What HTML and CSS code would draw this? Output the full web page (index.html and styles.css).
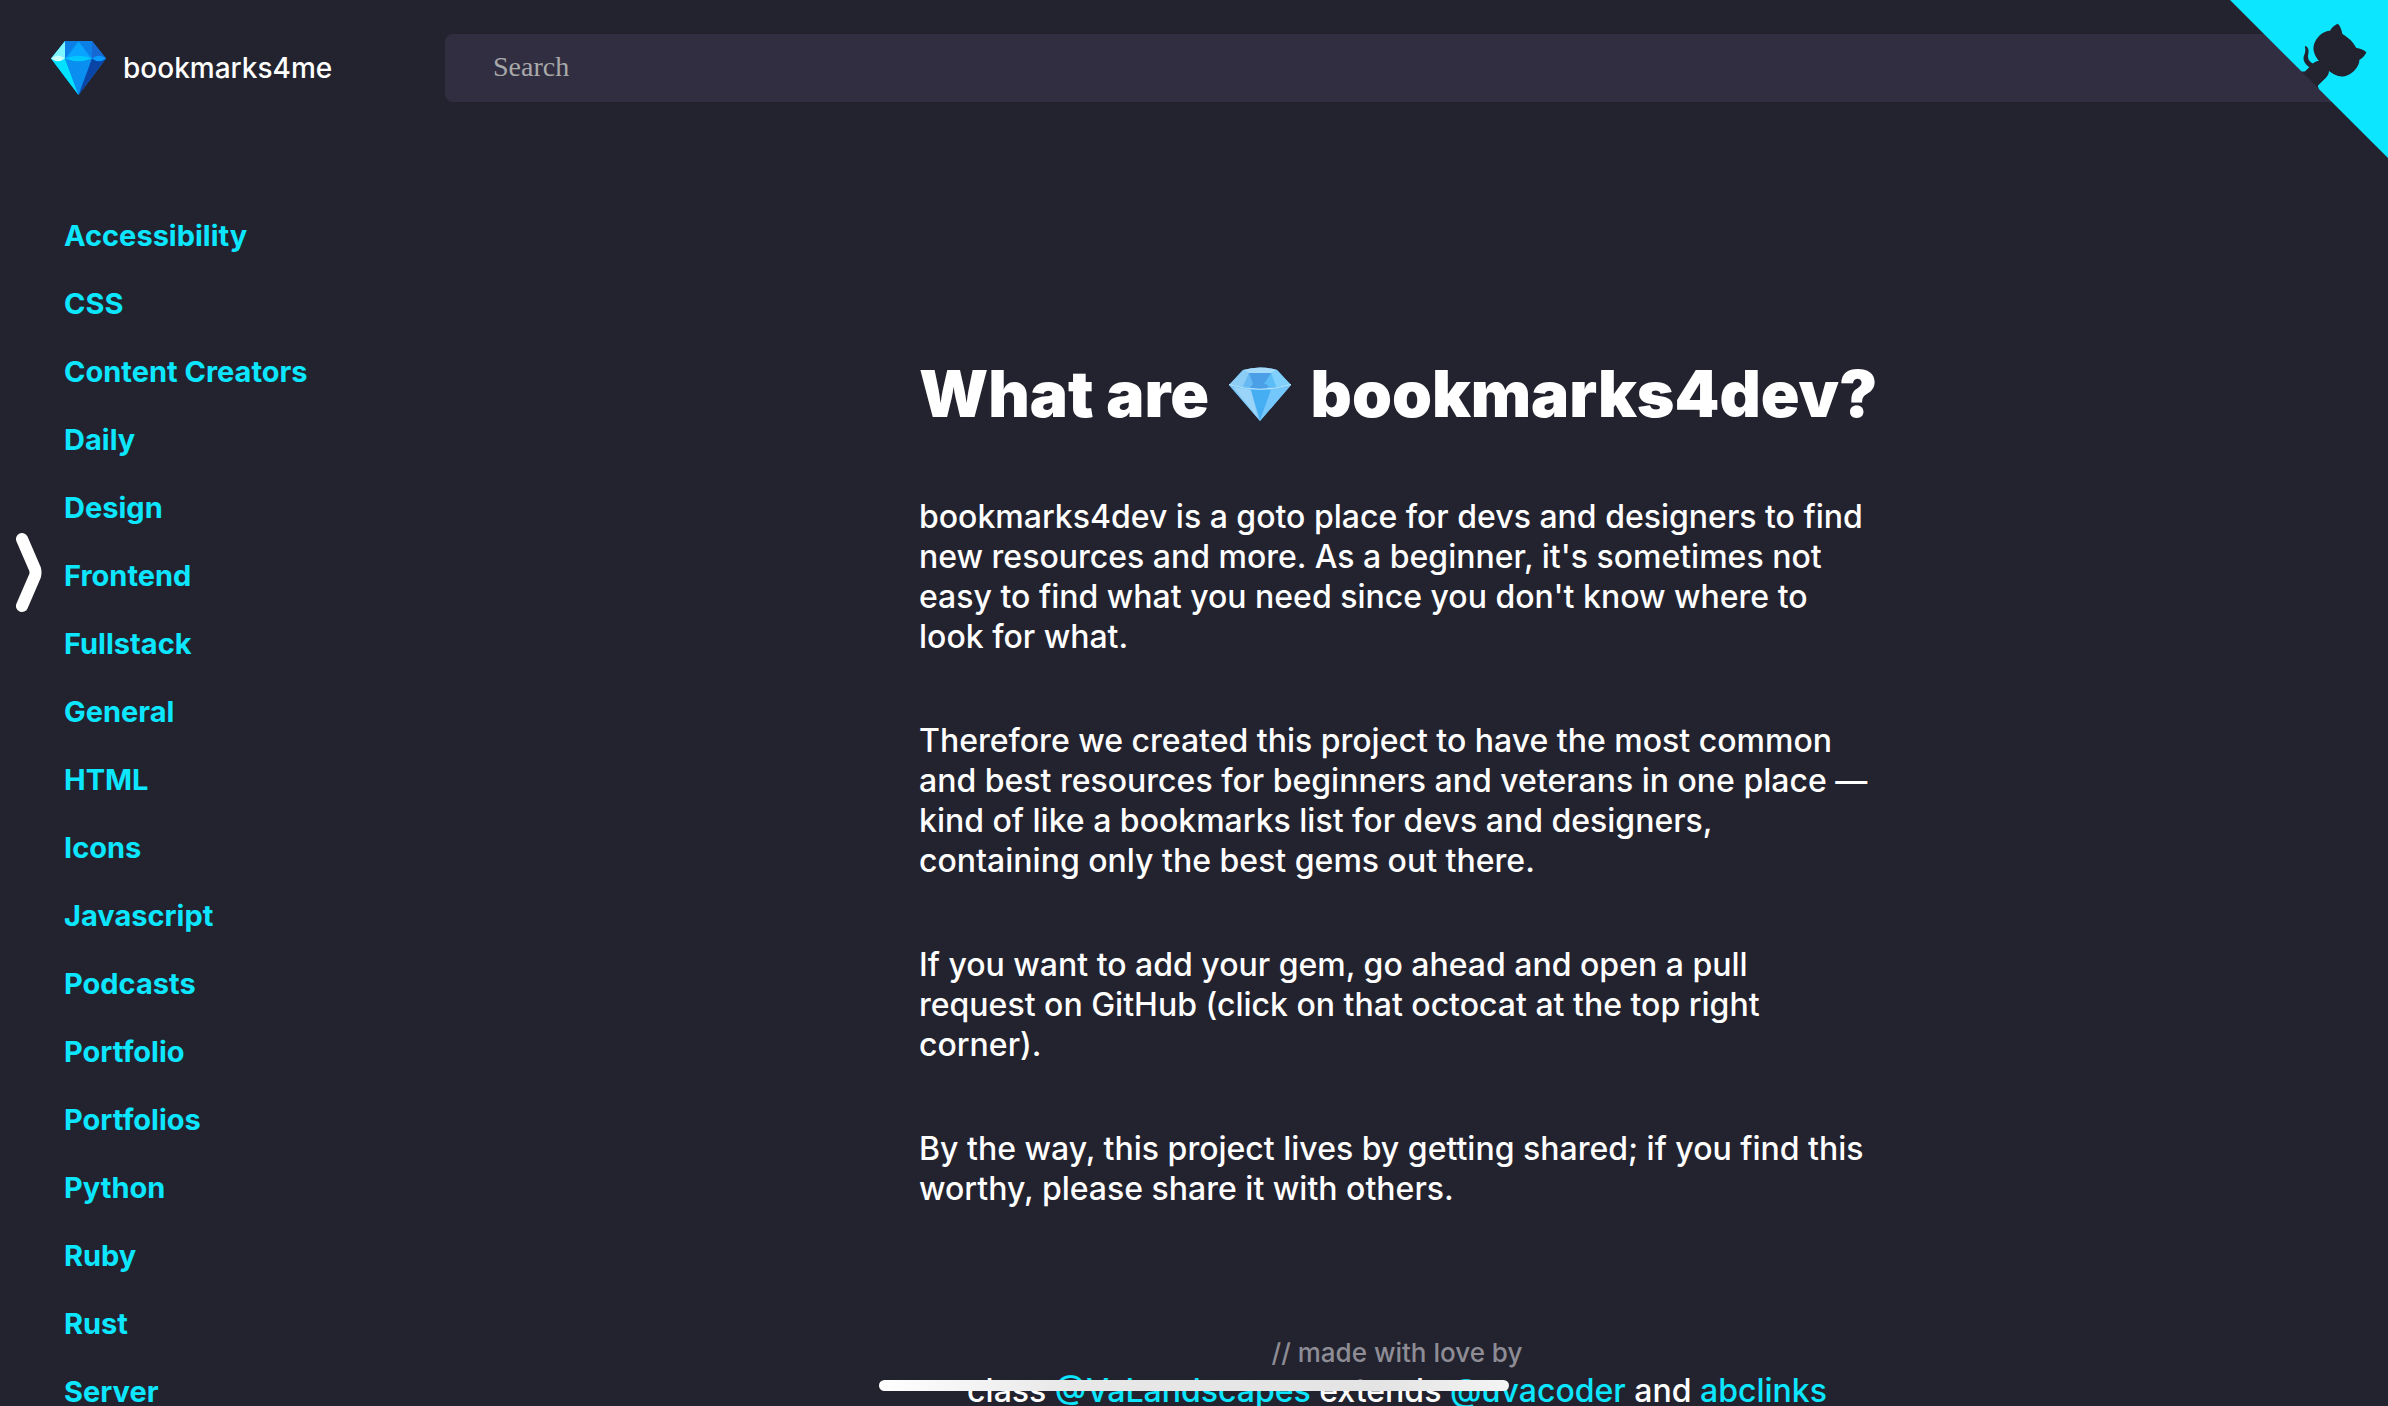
FILE: index.html
```html
<!DOCTYPE html>
<html lang="en">
<head>
<meta charset="utf-8">
<meta name="viewport" content="width=device-width, initial-scale=1">
<title>bookmarks4me</title>
<link rel="stylesheet" href="styles.css">
</head>
<body>
<header class="header">
  <a class="brand" href="#">
    <svg class="brand-gem" viewBox="0 0 55 54" aria-hidden="true">
      <path fill="#0a93f0" d="M14 0H41L55 17.500 27.500 54 0 17.500z"/>
      <path fill="#7df6ff" d="M14 0V17.500H0z"/>
      <path fill="#0b7fe6" d="M14 0H27.500L14 17.500zM27.500 0H41V17.500z"/>
      <path fill="#08a4ff" d="M27.500 1L40 17.500H15z"/>
      <path fill="#1669d4" d="M41 0L55 17.500H41z"/>
      <path fill="#00e2ff" d="M0 17.500H14L27.500 54z"/>
      <path fill="#0a8ef0" d="M14 17.500H41L27.500 54z"/>
      <path fill="#0a45a6" d="M41 17.500H55L27.500 54z"/>
      <path fill="#c9ffff" d="M0 17.500Q7 12 14 17.500 7 23 0 17.500z"/>
      <path fill="#00c8ff" d="M14 17.500Q27.500 12 41 17.500 27.500 23 14 17.500z"/>
      <path fill="#079bff" d="M41 17.500Q48 12 55 17.500 48 23 41 17.500z"/>
    </svg>
    <span>bookmarks4me</span>
  </a>
  <input class="search" type="search" placeholder="Search" aria-label="Search">
</header>

<a class="corner" href="#" aria-label="View source on GitHub">
  <svg class="corner-art" viewBox="0 0 250 250" aria-hidden="true">
    <path class="corner-fill" d="M0,0 L115,115 L130,115 L142,142 L250,250 L250,0 Z"/>
    <path class="corner-cat" d="M128.3,109.0 C113.8,99.7 119.0,89.6 119.0,89.6 C122.0,82.7 120.5,78.6 120.5,78.6 C119.2,72.0 123.4,76.3 123.4,76.3 C127.3,80.9 125.5,87.3 125.5,87.3 C122.9,97.6 130.6,101.9 134.4,103.2"/>
    <path class="corner-cat" d="M115.0,115.0 C114.9,115.1 118.7,116.5 119.8,115.4 L133.7,101.6 C136.9,99.2 139.9,98.4 142.2,98.6 C133.8,88.0 127.5,74.4 143.8,58.0 C148.5,53.4 154.0,51.2 159.7,51.0 C160.3,49.4 163.2,43.6 171.4,40.1 C171.4,40.1 176.1,42.5 178.8,56.2 C183.1,58.6 187.2,61.8 190.9,65.4 C194.5,69.0 197.7,73.2 200.1,77.6 C213.8,80.2 216.3,84.9 216.3,84.9 C212.7,93.1 206.9,96.0 205.4,96.6 C205.1,102.4 203.0,107.8 198.3,112.5 C181.9,128.9 168.3,122.5 157.7,114.1 C157.9,116.9 156.7,120.9 152.7,124.9 L141.0,136.5 C139.8,137.7 141.6,141.9 141.8,141.8 Z"/>
  </svg>
</a>

<div class="layout">
  <nav class="sidebar" aria-label="Categories">
    <a href="#">Accessibility</a>
    <a href="#">CSS</a>
    <a href="#">Content Creators</a>
    <a href="#">Daily</a>
    <a href="#">Design</a>
    <a href="#">Frontend</a>
    <a href="#">Fullstack</a>
    <a href="#">General</a>
    <a href="#">HTML</a>
    <a href="#">Icons</a>
    <a href="#">Javascript</a>
    <a href="#">Podcasts</a>
    <a href="#">Portfolio</a>
    <a href="#">Portfolios</a>
    <a href="#">Python</a>
    <a href="#">Ruby</a>
    <a href="#">Rust</a>
    <a href="#">Server</a>
  </nav>

  <div class="content">
    <main class="about">
      <h1>What are <svg class="title-gem" viewBox="0 0 62 54" role="img" aria-label="gem">
        <path fill="#5db9f5" d="M14 3Q31-2 48 3L62 18 31 54 0 18z"/>
        <path fill="#a5dbfa" d="M14 3Q31-2 48 3L42 6H20z"/>
        <path fill="#8ccdf6" d="M14 3L20 6 16 20 0 18z"/>
        <path fill="#4a9fe6" d="M20 6H42L38 22H18z"/>
        <path fill="#66b9f2" d="M20 6L24 17 20 22 14 19z"/>
        <path fill="#7fd0fb" d="M48 3L42 6 47 20 62 18z"/>
        <path fill="#5dbdf7" d="M42 6L47 20 35 17z"/>
        <path fill="#7cc3f6" d="M0 18Q31 28 62 18L31 54z"/>
        <path fill="#9ad4f9" d="M4 20L22 23 29 51z"/>
        <path fill="#45aef3" d="M22 23H42L31 53z"/>
        <path fill="#73c7fa" d="M42 23L60 19 32 52z"/>
        <path fill="none" stroke="#b9e6fd" d="M0 17.500Q31 27 62 17.500"/>
      </svg> bookmarks4dev?</h1>
      <p>bookmarks4dev is a goto place for devs and designers to find new resources and more. As a beginner, it's sometimes not easy to find what you need since you don't know where to look for what.</p>
      <p>Therefore we created this project to have the most common and best resources for beginners and veterans in one place — kind of like a bookmarks list for devs and designers, containing only the best gems out there.</p>
      <p>If you want to add your gem, go ahead and open a pull request on GitHub (click on that octocat at the top right corner).</p>
      <p>By the way, this project lives by getting shared; if you find this worthy, please share it with others.</p>
    </main>
    <footer class="footer">
      <div class="made">// made with love by</div>
      <div class="authors">class <a href="#">@VaLandscapes</a> extends <a href="#">@uvacoder</a> and <a href="#">abclinks</a></div>
    </footer>
  </div>
</div>

<svg class="drawer-arrow" viewBox="0 0 26 80" aria-hidden="true"><path d="M6 6L19 36Q20 39.500 19 43L6 73"/></svg>
<div class="home-bar"></div>
</body>
</html>
```

FILE: styles.css
```css
:root {
  --bg: #23232f;
  --field: #312e42;
  --accent: #0de6ff;
  --side: 406px;
}

* {
  box-sizing: border-box;
}

html {
  scrollbar-width: none;
}

body {
  margin: 0;
  background: var(--bg);
  color: #fff;
  font-family: Inter, "Liberation Sans", sans-serif;
  font-weight: 500;
}

a {
  color: var(--accent);
  text-decoration: none;
}

.header {
  display: flex;
  align-items: center;
  padding: 34px 38px 0 0;
}

.brand {
  display: flex;
  align-items: center;
  gap: 17px;
  flex: none;
  width: 445px;
  padding-left: 51px;
  color: #fff;
  font-size: 28px;
}

.brand-gem {
  width: 55px;
  height: 54px;
}

.search {
  flex: 1;
  min-width: 0;
  height: 68px;
  padding: 0 48px 2px;
  border: 0;
  border-radius: 8px;
  background: var(--field);
  color: #fff;
  font: 400 28px "Liberation Serif", serif;
  appearance: none;
}

.search::placeholder {
  color: #a9a9a9;
  opacity: 1;
}

.corner {
  position: absolute;
  top: -2px;
  right: 0;
}

.corner-art {
  display: block;
  width: 160px;
  height: 160px;
}

.corner-fill {
  fill: var(--accent);
}

.corner-cat {
  fill: var(--bg);
}

.layout {
  display: flex;
  padding-top: 100px;
}

.sidebar {
  display: flex;
  flex: none;
  flex-direction: column;
  align-items: flex-start;
  width: var(--side);
  padding-left: 64px;
  font-size: 29px;
  font-weight: 700;
  line-height: 68px;
}

.content {
  flex: 1;
  min-width: 0;
  padding: 152px 40px 0;
}

.about {
  max-width: 956px;
  margin: 0 auto;
}

.about h1 {
  margin: 0 0 63px;
  font-size: 64px;
  font-weight: 900;
  line-height: 80px;
  white-space: nowrap;
}

.title-gem {
  width: 62px;
  height: 54px;
  margin: 0 7px;
  vertical-align: -4px;
}

.about p {
  margin: 0 0 64px;
  padding-right: 5px;
  font-size: 32px;
  line-height: 40px;
}

.footer {
  padding-top: 60px;
  text-align: center;
}

.made {
  color: #8e8d96;
  font-size: 26px;
  line-height: 40px;
}

.authors {
  font-size: 32px;
  line-height: 36px;
}

.drawer-arrow {
  position: fixed;
  top: 533px;
  left: 16px;
  width: 26px;
  height: 80px;
  fill: none;
  stroke: #fff;
  stroke-width: 12;
  stroke-linecap: round;
}

.home-bar {
  position: fixed;
  bottom: 15px;
  left: 50%;
  width: 630px;
  height: 11px;
  margin-left: -315px;
  border-radius: 6px;
  background: linear-gradient(90deg, #fff, #e8e8e8 30%, #e4e4e4 80%, #f4f4f4);
}
```
